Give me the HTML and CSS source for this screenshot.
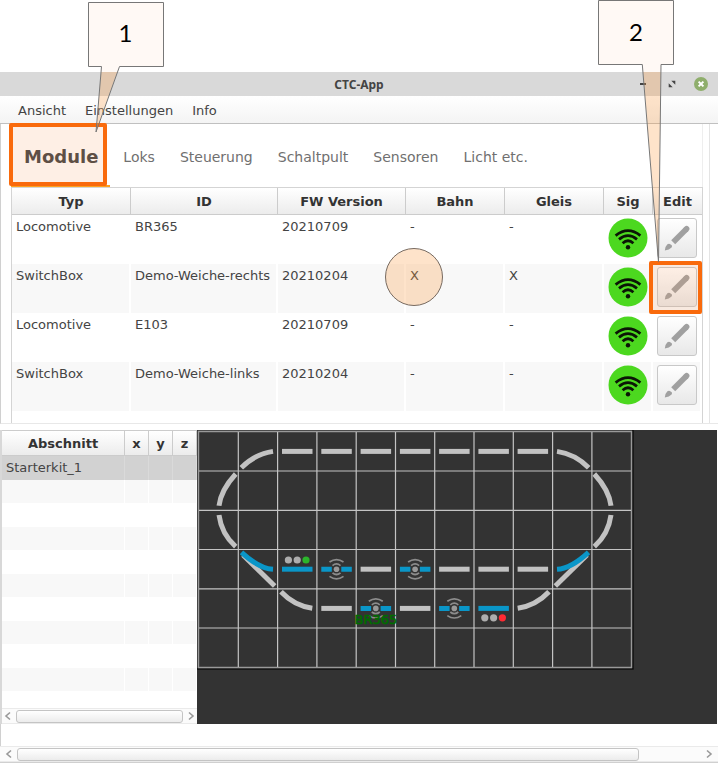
FILE: index.html
```html
<!DOCTYPE html>
<html lang="de">
<head>
<meta charset="utf-8">
<title>CTC-App</title>
<link rel="stylesheet" href="styles.css">
</head>
<body>
<svg class="defs" aria-hidden="true">
  <symbol id="wifi" viewBox="0 0 40 40">
    <circle cx="20" cy="20" r="19.5" fill="#4cd81f"/>
    <g fill="none" stroke="#0b1506" stroke-width="2.8">
      <path d="M7.6 17.6Q20 7.6 32.4 17.6"/>
      <path d="M11 21.4Q20 13.8 29 21.4"/>
      <path d="M14.6 25.2Q20 20.4 25.4 25.2"/>
    </g>
    <circle cx="20" cy="29.3" r="2.2" fill="#0b1506"/>
  </symbol>
  <symbol id="pencil" viewBox="0 0 40 40">
    <path d="M29.4 11L16.2 24.2" stroke="#a0a0a0" stroke-width="5.6"/>
    <path d="M29 11.4L29.6 10.8" stroke="#a0a0a0" stroke-width="5.6" stroke-linecap="round"/>
    <path d="M10.4 26.2Q12.4 25 13.6 26.6Q15.8 27.6 14.6 29.6Q12.4 32 7.8 32.6Q8 28.4 10.4 26.2Z" fill="#a0a0a0"/>
  </symbol>
  <symbol id="prev" viewBox="0 0 8 10"><path d="M6 1.5L2 5L6 8.5" fill="none" stroke="#999" stroke-width="1.6"/></symbol>
  <symbol id="next" viewBox="0 0 8 10"><path d="M2 1.5L6 5L2 8.5" fill="none" stroke="#999" stroke-width="1.6"/></symbol>
</svg>

<main class="window">
  <header class="titlebar">
    <h1>CTC-App</h1>
    <div class="controls">
      <button aria-label="Minimieren"><svg width="16" height="16" viewBox="0 0 16 16"><path d="M5 8H11" stroke="#444" stroke-width="2"/></svg></button>
      <button aria-label="Wiederherstellen"><svg width="16" height="16" viewBox="0 0 16 16"><path d="M7.3 4.7H11.3V8.7ZM4.7 7.3V11.3H8.7Z" fill="#444"/></svg></button>
      <button aria-label="Schließen"><svg width="16" height="16" viewBox="0 0 16 16"><circle cx="8" cy="8" r="7" fill="#8fae6c"/><path d="M5.6 5.6L10.4 10.4M10.4 5.6L5.6 10.4" stroke="#fff" stroke-width="2"/></svg></button>
    </div>
  </header>
  <nav class="menubar">
    <button>Ansicht</button><button>Einstellungen</button><button>Info</button>
  </nav>

  <section class="upper">
    <div class="panel">
      <div class="tabs">
        <div class="tab-slot">
          <button class="tab active">Module</button>
          <div class="mark mark-tab"></div>
          <svg class="callout callout-one" width="77" height="132" viewBox="88 1 77 132">
            <path d="M88.5 2.5H163.5V66.5H119.5L117.3 72H101L101.5 66.5H88.5Z" fill="#fff9f5"/>
            <path d="M101 72H117.3L96 132Z" fill="#fa963c" fill-opacity=".27"/>
            <path d="M88.5 2.5H163.5V66.5H119.5L96 132L101.5 66.5H88.5Z" fill="none" stroke="#777" stroke-width="1"/>
            <text x="125.5" y="42">1</text>
          </svg>
        </div>
        <button class="tab">Loks</button>
        <button class="tab">Steuerung</button>
        <button class="tab">Schaltpult</button>
        <button class="tab">Sensoren</button>
        <button class="tab">Licht etc.</button>
      </div>
      <div class="table-box">
        <table class="modules">
          <colgroup><col class="c-type"><col><col class="c-fw"><col class="c-track"><col class="c-track"><col class="c-icon"><col class="c-icon"></colgroup>
          <thead><tr><th>Typ</th><th>ID</th><th>FW Version</th><th>Bahn</th><th>Gleis</th><th>Sig</th><th>Edit</th></tr></thead>
          <tbody>
            <tr><td>Locomotive</td><td>BR365</td><td>20210709</td><td>-</td><td>-</td>
              <td class="icon"><svg width="40" height="40"><use href="#wifi"/></svg></td>
              <td class="icon"><button class="edit" aria-label="BR365 bearbeiten"><svg width="40" height="40"><use href="#pencil"/></svg></button></td></tr>
            <tr><td>SwitchBox</td><td>Demo-Weiche-rechts</td><td>20210204</td><td class="anchor">X<div class="spot"></div></td><td>X</td>
              <td class="icon"><svg width="40" height="40"><use href="#wifi"/></svg></td>
              <td class="icon anchor"><button class="edit" aria-label="Demo-Weiche-rechts bearbeiten"><svg width="40" height="40"><use href="#pencil"/></svg></button>
                <svg class="callout callout-two" width="77" height="263" viewBox="598 0 77 263">
                  <path d="M598.5 .5H673.5V64.5H661L660.9 72H643L642.3 64.5H598.5Z" fill="#fff9f5"/>
                  <path d="M643 72H660.9L658.5 262Z" fill="#fa963c" fill-opacity=".27"/>
                  <path d="M598.5 .5H673.5V64.5H661L658.5 262L642.3 64.5H598.5Z" fill="none" stroke="#777" stroke-width="1"/>
                  <text x="636" y="41">2</text>
                </svg>
                <div class="mark mark-edit"></div></td></tr>
            <tr><td>Locomotive</td><td>E103</td><td>20210709</td><td>-</td><td>-</td>
              <td class="icon"><svg width="40" height="40"><use href="#wifi"/></svg></td>
              <td class="icon"><button class="edit" aria-label="E103 bearbeiten"><svg width="40" height="40"><use href="#pencil"/></svg></button></td></tr>
            <tr><td>SwitchBox</td><td>Demo-Weiche-links</td><td>20210204</td><td>-</td><td>-</td>
              <td class="icon"><svg width="40" height="40"><use href="#wifi"/></svg></td>
              <td class="icon"><button class="edit" aria-label="Demo-Weiche-links bearbeiten"><svg width="40" height="40"><use href="#pencil"/></svg></button></td></tr>
          </tbody>
        </table>
      </div>
    </div>
  </section>

  <section class="lower">
    <div class="sections">
      <div class="rows">
        <table>
          <colgroup><col><col class="c-xy"><col class="c-xy"><col class="c-xy"></colgroup>
          <thead><tr><th>Abschnitt</th><th>x</th><th>y</th><th>z</th></tr></thead>
          <tbody>
            <tr class="selected"><td>Starterkit_1</td><td></td><td></td><td></td></tr>
            <tr><td></td><td></td><td></td><td></td></tr>
            <tr><td></td><td></td><td></td><td></td></tr>
            <tr><td></td><td></td><td></td><td></td></tr>
            <tr><td></td><td></td><td></td><td></td></tr>
            <tr><td></td><td></td><td></td><td></td></tr>
            <tr><td></td><td></td><td></td><td></td></tr>
            <tr><td></td><td></td><td></td><td></td></tr>
            <tr><td></td><td></td><td></td><td></td></tr>
            <tr><td></td><td></td><td></td><td></td></tr>
          </tbody>
        </table>
      </div>
      <div class="scrollbar">
        <button aria-label="Nach links"><svg width="8" height="10"><use href="#prev"/></svg></button>
        <div class="thumb"></div>
        <button aria-label="Nach rechts"><svg width="8" height="10"><use href="#next"/></svg></button>
      </div>
    </div>
    <div class="canvas">
      <svg width="520" height="294" viewBox="197 430 520 294" role="img" aria-label="Gleisplan">
        <defs>
          <path id="bar" d="M0 0H30.5" stroke-width="5"/>
          <g id="sensor">
            <path d="M0 0H10.5M20 0H30.5" stroke="#0a96c8" stroke-width="5"/>
            <circle cx="15.2" cy="0" r="2.8" fill="#999"/>
            <path d="M8.2-7.2Q15.2-12 22.2-7.2M11.2-3.6Q15.2-7 19.2-3.6M8.2 7.2Q15.2 12 22.2 7.2M11.2 3.6Q15.2 7 19.2 3.6" fill="none" stroke="#8c8c8c" stroke-width="1.7"/>
          </g>
          <g id="bend">
            <g fill="none" stroke="#c2c2c2" stroke-width="5">
              <path d="M273 451.4Q255 454 241.3 467.7"/>
              <path d="M235.7 474Q221 490 219 505.7"/>
              <path d="M219 515Q221.5 534 235.7 546.7"/>
              <path d="M243 555L274.7 586"/>
              <path d="M281 591.7Q294 605.5 312.3 608.2"/>
            </g>
            <path d="M241.5 552.3Q259 568.5 273 569.3" fill="none" stroke="#0a96c8" stroke-width="5"/>
          </g>
        </defs>
        <path d="M197 669H633V430" fill="none" stroke="#111" stroke-width="1.5"/>
        <path d="M198.5 431V668M631.5 431V668M198 431.5H632M198 667.5H632" stroke="#999" stroke-width="1.4"/>
        <path d="M238.3 432V667M277.6 432V667M316.9 432V667M356.2 432V667M395.5 432V667M434.7 432V667M474 432V667M513.3 432V667M552.6 432V667M591.9 432V667M199 471H631M199 510.3H631M199 549.5H631M199 588.8H631M199 628H631" stroke="#c4c4c4" stroke-width="1.2"/>
        <use href="#bend"/>
        <use href="#bend" transform="matrix(-1 0 0 1 830 0)"/>
        <g stroke="#c2c2c2">
          <use href="#bar" x="282" y="451.4"/><use href="#bar" x="321.3" y="451.4"/><use href="#bar" x="360.6" y="451.4"/><use href="#bar" x="399.9" y="451.4"/><use href="#bar" x="439.1" y="451.4"/><use href="#bar" x="478.4" y="451.4"/><use href="#bar" x="517.6" y="451.4"/>
          <use href="#bar" x="360.6" y="569.2"/><use href="#bar" x="439.1" y="569.2"/><use href="#bar" x="478.4" y="569.2"/><use href="#bar" x="517.6" y="569.2"/>
          <use href="#bar" x="321.3" y="608.4"/><use href="#bar" x="399.9" y="608.4"/>
        </g>
        <g stroke="#0a96c8"><use href="#bar" x="282" y="569.2"/><use href="#bar" x="478.4" y="608.4"/></g>
        <use href="#sensor" x="321.3" y="569.2"/><use href="#sensor" x="399.9" y="569.2"/>
        <use href="#sensor" x="360.6" y="608.4"/><use href="#sensor" x="439.1" y="608.4"/>
        <g fill="#adadad">
          <circle cx="288.4" cy="560" r="3.6"/><circle cx="297.2" cy="560" r="3.6"/><circle cx="306" cy="560" r="3.6" fill="#2bb52b"/>
          <circle cx="484.8" cy="617.8" r="3.6"/><circle cx="493.6" cy="617.8" r="3.6"/><circle cx="502.4" cy="617.8" r="3.6" fill="#ff2a32"/>
        </g>
        <text class="loco" x="376" y="624">BR365</text>
      </svg>
    </div>
  </section>

  <div class="spacer"></div>
  <div class="scrollbar outer">
    <button aria-label="Nach links"><svg width="8" height="10"><use href="#prev"/></svg></button>
    <div class="track"><div class="thumb"></div></div>
    <button aria-label="Nach rechts"><svg width="8" height="10"><use href="#next"/></svg></button>
  </div>
</main>
</body>
</html>
```
FILE: styles.css
```css
* { box-sizing: border-box; }

body {
  margin: 0;
  padding-top: 72px;
  background: #fff;
  color: #444;
  font: 13px/16px "DejaVu Sans", sans-serif;
}

button {
  border: 0;
  padding: 0;
  background: none;
  color: inherit;
  font: inherit;
}

svg { display: block; }
.defs { position: absolute; width: 0; height: 0; }

.window { border-bottom: 1px solid #d0d0d0; }

.titlebar {
  display: grid;
  grid-template-columns: 1fr auto 1fr;
  align-items: center;
  height: 24px;
  background: #d9d9d9;
}
.titlebar h1 {
  grid-column: 2;
  margin: 0;
  padding-top: 2px;
  font: bold 12px/16px "Noto Sans", sans-serif;
}
.controls {
  display: flex;
  justify-content: flex-end;
  gap: 13px;
  padding-right: 9px;
}

.menubar {
  display: flex;
  gap: 19px;
  height: 28px;
  padding: 2px 18px 0;
  border-bottom: 1px solid #c0c0c0;
  background: linear-gradient(#fff, #f4f4f4);
}

.upper {
  padding-right: 8px;
  border-bottom: 1px solid #e8e8e8;
  border-left: 1px solid #d0d0d0;
}
.panel {
  padding: 0 6px 0 10px;
  border-right: 1px solid #e4e4e4;
}

.tabs {
  display: flex;
  gap: 1px;
  height: 63px;
  border-right: 1px solid #eee;
}
.tab {
  height: 63px;
  padding: 2px 12px 0;
  color: #707070;
  font-size: 14px;
}
.tab.active {
  border-bottom: 2px solid #ffa01e;
  padding: 4px 12px 0 13px;
  color: #444;
  font-size: 18px;
  font-weight: bold;
}
.tab-slot { position: relative; }

.mark {
  position: absolute;
  z-index: 2;
  border: 4px solid #f96a0c;
  border-radius: 2px;
  background: rgba(250, 150, 80, .15);
  pointer-events: none;
}
.mark-tab { inset: -1px 3px 1px -2px; }
.mark-edit { inset: -3px -2px -1px -4px; }

.callout {
  position: absolute;
  z-index: 3;
  pointer-events: none;
}
.callout text {
  fill: #000;
  font: 24px Lato, sans-serif;
  text-anchor: middle;
}
.callout-one { left: 77px; top: -123px; }
.callout-two { right: 25px; top: -264px; }

table {
  width: 100%;
  border-collapse: separate;
  border-spacing: 0;
  table-layout: fixed;
}
th {
  height: 27px;
  padding: 2px 0 0;
  border-right: 1px solid #ccc;
  border-bottom: 1px solid #ccc;
  background: linear-gradient(#fff, #ececec);
  color: #333;
}
td { padding: 0 4px; vertical-align: top; white-space: nowrap; }

.table-box {
  padding-bottom: 12px;
  border-right: 1px solid #d4d4d4;
  border-left: 1px solid #d4d4d4;
}
.modules { border-top: 1px solid #d4d4d4; }
.modules th:last-child { border-right: 0; }
.modules td {
  height: 49px;
  padding-top: 4px;
  border-right: 2px solid #fff;
}
.modules tr:nth-child(even) td { background: #f8f8f8; }
.modules .icon { padding: 3px 0 0 4px; }
.anchor { position: relative; }
.c-type { width: 119px; }
.c-fw { width: 128px; }
.c-track { width: 99px; }
.c-icon { width: 49px; }

.spot {
  position: absolute;
  left: -21px;
  top: -16px;
  width: 58px;
  height: 58px;
  border: 1px solid #776a60;
  border-radius: 50%;
  background: rgba(250, 150, 60, .27);
}

.edit {
  display: block;
  width: 40px;
  height: 40px;
  border: 1px solid #c8c8c8;
  border-radius: 3px;
  background: linear-gradient(#fff, #e8e8e8);
}
.edit svg { margin: -1px; }

.lower {
  display: flex;
  height: 294px;
  margin: 6px 1px 0 0;
  border-left: 2px solid #d8d8d8;
}
.sections {
  display: flex;
  flex: 0 0 195px;
  flex-direction: column;
}
.rows { flex: 1; overflow: hidden; }
.sections th { height: 26px; border-top: 1px solid #ccc; }
.sections td { height: 24px; line-height: 23px; border-right: 1px solid #fff; }
.sections tr:nth-child(even) td { height: 23px; background: #f8f8f8; }
.sections .selected td { background: #d2d2d2; border-right-color: #dadada; }
.c-xy { width: 24px; }

.canvas { flex: 1; min-width: 0; overflow: hidden; background: #333; }
.loco {
  fill: #006c00;
  stroke: #006c00;
  stroke-width: .6px;
  font-size: 13px;
  text-anchor: middle;
}

.spacer { height: 22px; border-left: 1px solid #d0d0d0; }

.scrollbar {
  display: flex;
  align-items: center;
  gap: 4px;
  height: 16px;
  padding: 0 2px;
  border: 1px solid #eaeaea;
  border-width: 1px 0;
  background: #fbfbfb;
}
.scrollbar .thumb {
  flex: 1;
  height: 13px;
  border: 1px solid #c4c4c4;
  border-radius: 3px;
  background: linear-gradient(#fff, #ececec);
}
.outer { padding: 0 5px; }
.track { display: flex; flex: 1; }
.outer .thumb { flex: 0 0 91%; }
```
